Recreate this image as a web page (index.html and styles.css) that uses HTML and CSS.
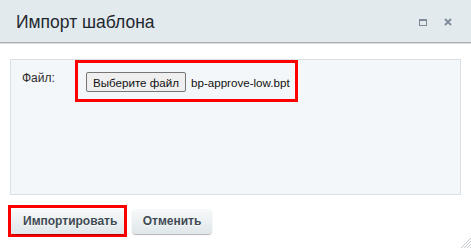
FILE: index.html
```html
<!DOCTYPE html>
<html lang="ru">
<head>
    <meta charset="UTF-8">
    <title>Импорт шаблона</title>
    <link rel="stylesheet" href="styles.css">
</head>
<body>

<div class="dialog">
    <div class="dialog-head">
        <span class="dialog-title">Импорт шаблона</span>
        <span class="head-icons">
            <span class="icon-max"></span>
            <svg class="icon-close" width="8" height="8" viewBox="0 0 8 8">
                <path d="M1 1L7 7M7 1L1 7" stroke="#7d8b99" stroke-width="1.8"/>
            </svg>
        </span>
    </div>

    <div class="dialog-body">
        <div class="panel">
            <span class="field-label">Файл:</span>
            <div class="mark file-box">
                <button class="file-btn">Выберите файл</button>
                <span class="file-name">bp-approve-low.bpt</span>
            </div>
        </div>
    </div>

    <div class="dialog-foot">
        <div class="mark btn-mark">
            <button class="btn">Импортировать</button>
        </div>
        <button class="btn btn-cancel">Отменить</button>
    </div>

    <svg class="resize-grip" width="12" height="12" viewBox="0 0 12 12">
        <path d="M12 2L2 12M12 5L5 12M12 8L8 12M12 11L11 12" stroke="#c4c9cc" stroke-width="1"/>
    </svg>
</div>

</body>
</html>
```

FILE: styles.css
```css
body {
    margin: 0;
    background-color: #ffffff;
    font-family: "Liberation Sans", Arial, sans-serif;
}

.dialog {
    position: relative;
    width: 471px;
    height: 248px;
    background-color: #ffffff;
}

.dialog-head {
    height: 43px;
    display: flex;
    align-items: center;
    justify-content: space-between;
    padding: 0 19px 0 16px;
    background-color: #e3eaed;
    border-bottom: 1px solid #a8aeb2;
    box-shadow: 0 1px 0 #d8dcde;
    box-sizing: border-box;
}

.dialog-title {
    font-size: 17.5px;
    color: #1e2830;
    margin-top: 2px;
}

.head-icons {
    display: flex;
    align-items: center;
    gap: 17px;
    margin-top: 2px;
}

.icon-max {
    width: 8px;
    height: 7px;
    border: 1px solid #7d8b99;
    border-top-width: 2px;
    box-sizing: border-box;
}

.icon-close {
    display: block;
}

.dialog-body {
    padding: 16px 10px 0 10px;
}

.panel {
    height: 136px;
    display: flex;
    align-items: flex-start;
    background-color: #f4f7f9;
    border: 1px solid #d9e1e6;
    box-sizing: border-box;
}

.field-label {
    font-size: 12px;
    color: #2b2b2b;
    margin: 11px 0 0 11px;
    width: 53px;
}

.mark {
    border: 3px solid #ff0000;
}

.file-box {
    display: flex;
    align-items: center;
    width: 223px;
    height: 42px;
    padding-left: 8px;
    box-sizing: border-box;
    white-space: nowrap;
}

.file-btn {
    width: 100px;
    height: 20px;
    padding: 0;
    font-family: inherit;
    font-size: 11.6px;
    color: #111;
    background-color: #efefef;
    border: 1px solid #767676;
    border-radius: 2px;
    margin-top: 2px;
}

.file-name {
    font-size: 11.6px;
    color: #111;
    margin-left: 5px;
    margin-top: 2px;
}

.dialog-foot {
    display: flex;
    align-items: center;
    gap: 5px;
    padding: 10px 0 0 8px;
}

.btn-mark {
    display: flex;
}

.btn {
    height: 26px;
    padding: 0 12px;
    font-family: inherit;
    font-size: 12px;
    font-weight: bold;
    color: #3f4b54;
    background: linear-gradient(#f8fafa, #dfe7ea);
    border: none;
    border-radius: 4px;
    box-shadow: 0 1px 1px rgba(0, 0, 0, 0.3), inset 0 1px 0 #ffffff;
    text-shadow: 0 1px rgba(255, 255, 255, 0.7);
}

.btn-mark .btn {
    width: 113px;
}

.btn-cancel {
    width: 80px;
    padding: 0;
}

/* угол для растягивания окна */
.resize-grip {
    position: absolute;
    right: 0;
    bottom: 0;
}
```
